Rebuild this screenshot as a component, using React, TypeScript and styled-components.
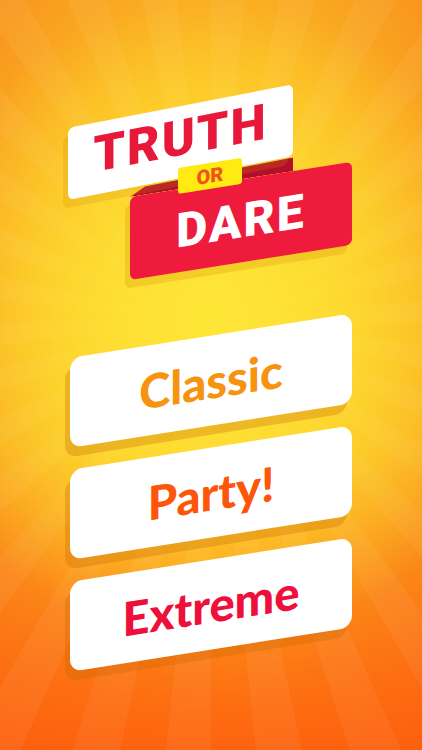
import React from "react";
import styled, { createGlobalStyle } from "styled-components";

const GlobalStyle = createGlobalStyle`
  html, body {
    margin: 0;
    padding: 0;
  }
  body {
    font-family: "Lato", "Liberation Sans", sans-serif;
  }
`;

const modes = [
  { label: "Classic", color: "#f7930f" },
  { label: "Party!", color: "#fd560a" },
  { label: "Extreme", color: "#ee0f3a" },
];

const App: React.FC = () => {
  return (
    <>
      <GlobalStyle />
      <Screen>
        <Logo>
          <TruthCard>
            <TruthText>TRUTH</TruthText>
          </TruthCard>
          <DareCard>
            <DareText>DARE</DareText>
          </DareCard>
          <OrBadge>
            <OrText>OR</OrText>
          </OrBadge>
        </Logo>
        <Menu>
          {modes.map((mode) => (
            <ModeButton key={mode.label} $color={mode.color}>
              {mode.label}
            </ModeButton>
          ))}
        </Menu>
      </Screen>
    </>
  );
};

export default App;

const Screen = styled.div`
  position: relative;
  width: 422px;
  height: 750px;
  box-sizing: border-box;
  padding-top: 128px;
  overflow: hidden;
  background:
    radial-gradient(
      circle at 50% 43%,
      rgba(254, 230, 54, 0.95) 0px,
      rgba(254, 226, 50, 0.6) 150px,
      rgba(254, 226, 50, 0) 320px
    ),
    repeating-conic-gradient(
      from 0deg at 50% 43%,
      rgba(255, 255, 255, 0.05) 0deg 6deg,
      rgba(255, 255, 255, 0) 6deg 12deg
    ),
    linear-gradient(
      to bottom,
      rgba(255, 90, 10, 0) 60%,
      rgba(255, 85, 10, 0.8) 100%
    ),
    radial-gradient(
      ellipse 80% 70% at 50% 43%,
      #fde236 0%,
      #fcc527 40%,
      #f9a01f 75%,
      #f98a1b 100%
    );
`;

const Logo = styled.div`
  position: relative;
  padding-left: 68px;
  display: flex;
  flex-direction: column;
  align-items: flex-start;
`;

const TruthCard = styled.div`
  position: relative;
  z-index: 2;
  width: 225px;
  height: 72px;
  box-sizing: border-box;
  padding-bottom: 8px;
  background: #ffffff;
  border-radius: 6px;
  transform: skewY(-11deg);
  transform-origin: 0 0;
  box-shadow: -5px 8px 0 rgba(214, 140, 0, 0.22);
  display: flex;
  align-items: center;
  justify-content: center;
`;

const TruthText = styled.span`
  font-family: "Roboto", "Liberation Sans", sans-serif;
  font-weight: 900;
  font-size: 50px;
  line-height: 1;
  letter-spacing: 2px;
  color: #e8183a;
`;

const DareCard = styled.div`
  position: relative;
  z-index: 1;
  margin-left: 62px;
  margin-top: -3px;
  width: 222px;
  height: 83px;
  background: #ee1b3d;
  border-radius: 6px;
  transform: skewY(-9deg);
  transform-origin: 0 0;
  box-shadow: -5px 8px 0 rgba(214, 140, 0, 0.25);
  display: flex;
  align-items: center;
  justify-content: center;

  &::before {
    content: "";
    position: absolute;
    left: 0;
    top: -16px;
    width: 163px;
    height: 16px;
    background: #b30f2b;
    clip-path: polygon(0 100%, 15px 50%, 100% 15%, 100% 100%);
  }
`;

const DareText = styled.span`
  font-family: "Roboto", "Liberation Sans", sans-serif;
  font-weight: 900;
  font-size: 48px;
  line-height: 1;
  letter-spacing: 2px;
  color: #ffffff;
`;

const OrBadge = styled.div`
  position: absolute;
  z-index: 3;
  left: 178px;
  top: 40px;
  width: 64px;
  height: 26px;
  background: #ffea12;
  border-radius: 3px;
  transform: skewY(-9deg);
  transform-origin: 0 0;
  display: flex;
  align-items: center;
  justify-content: center;
`;

const OrText = styled.span`
  font-family: "Roboto", "Liberation Sans", sans-serif;
  font-weight: 900;
  font-size: 20px;
  line-height: 1;
  color: #f0541c;
`;

const Menu = styled.div`
  margin-top: 78px;
  padding-left: 70px;
  display: flex;
  flex-direction: column;
  gap: 22px;
`;

const ModeButton = styled.div<{ $color: string }>`
  width: 282px;
  height: 90px;
  background: #ffffff;
  border-radius: 12px;
  transform: skewY(-9deg);
  transform-origin: 0 0;
  box-shadow: -5px 9px 0 rgba(200, 100, 0, 0.3);
  display: flex;
  align-items: center;
  justify-content: center;
  font-family: "Lato", "Open Sans", sans-serif;
  font-weight: 900;
  font-size: 47px;
  line-height: 1;
  color: ${(p) => p.$color};
  cursor: pointer;
`;
